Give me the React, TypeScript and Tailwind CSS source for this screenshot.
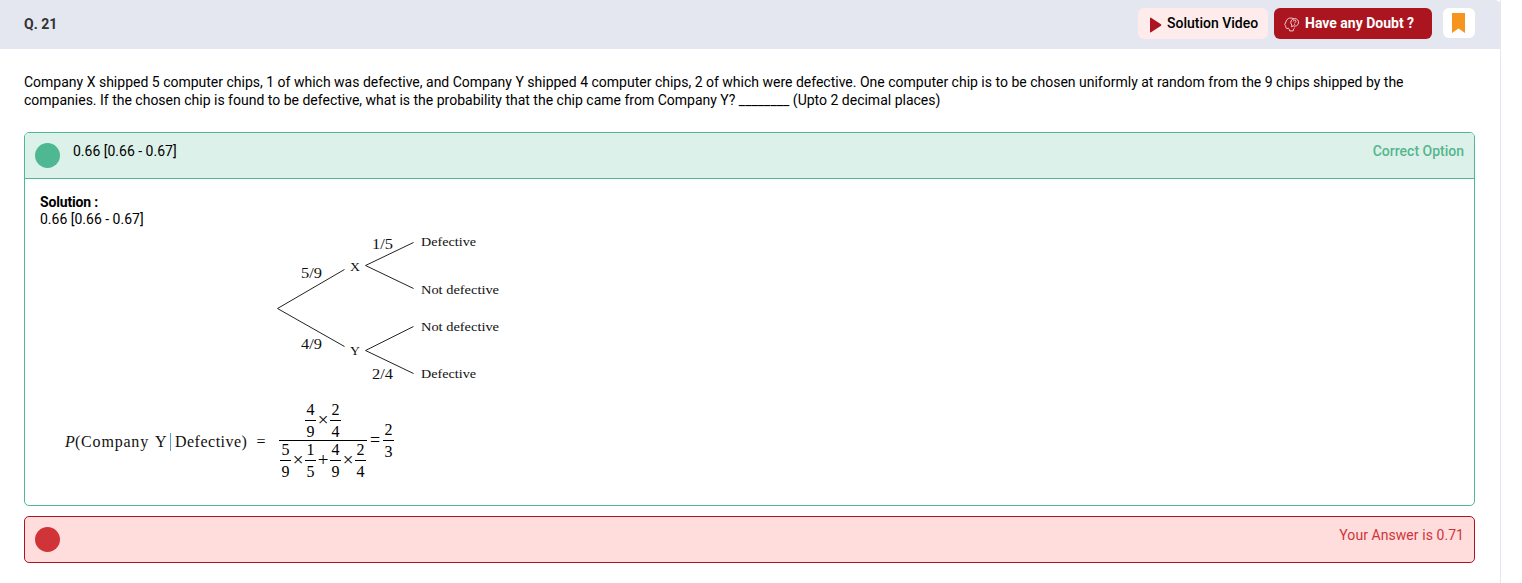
import React from "react";
import type { ReactNode } from "react";

function Fraction({ top, bottom }: { top: ReactNode; bottom: ReactNode }) {
  return (
    <span className="flex w-[11px] flex-col items-center">
      <span className="h-[22px] leading-[23px]">{top}</span>
      <span className="h-px w-full bg-black" />
      <span className="h-[21px] leading-[21px]">{bottom}</span>
    </span>
  );
}

function Operator({ children }: { children: ReactNode }) {
  return <span className="w-[14px] text-center text-[19px] leading-[20px]">{children}</span>;
}

const branches = [
  [252, 31, 319, -8],
  [252, 31, 319, 69],
  [340, -12, 388, -35],
  [340, -12, 388, 11],
  [340, 73, 388, 49],
  [340, 73, 388, 96],
];

const labels: [number, number, number, string][] = [
  [347, -28, 21, "1/5"],
  [276, 1, 21, "5/9"],
  [325, -6, 10, "X"],
  [276, 72, 21, "4/9"],
  [325, 78, 10, "Y"],
  [347, 102, 21, "2/4"],
];

const outcomes: [number, number, string][] = [
  [-31, 55, "Defective"],
  [17, 78, "Not defective"],
  [54, 78, "Not defective"],
  [101, 55, "Defective"],
];

function ProbabilityTree() {
  return (
    <svg width="500" height="160" viewBox="15 -47 500 160" className="block font-['Liberation_Serif',serif]">
      {branches.map(([x1, y1, x2, y2]) => (
        <line key={`${x1}-${y1}-${x2}-${y2}`} x1={x1 + 0.5} y1={y1 + 0.5} x2={x2 + 0.5} y2={y2 + 0.5} stroke="#222" />
      ))}
      {labels.map(([x, y, w, t]) => (
        <text key={t} x={x} y={y} textLength={w} lengthAdjust="spacingAndGlyphs" fontSize={w > 10 ? 14.5 : 13} fill="#111">
          {t}
        </text>
      ))}
      {outcomes.map(([y, w, t]) => (
        <text key={y} x={396} y={y} textLength={w} lengthAdjust="spacingAndGlyphs" fontSize="13.5" fill="#111">
          {t}
        </text>
      ))}
    </svg>
  );
}

export default function App() {
  return (
    <div className="h-[583px] w-[1501px] overflow-hidden border-r border-[#e4e6f3] bg-white font-[Roboto,sans-serif] text-sm text-black">
      <header className="flex h-[49px] w-[1501px] items-center rounded-tr-md bg-[#e4e7f0] pr-[26px] pb-[2px] pl-6">
        <h1 className="mt-px mr-auto font-bold text-[#333]">Q. 21</h1>
        <button className="mr-1.5 flex h-[31px] w-[130px] items-center rounded-md bg-[#fdeceb] pl-3 font-medium">
          <svg width="12" height="16" viewBox="0 0 12 16" className="mt-0.5 mr-[5px]">
            <path d="M0 1.2Q0 .2 1 .7L11 7.3Q11.8 8 11 8.7L1 15.3Q0 15.8 0 14.8Z" fill="#ab1420" />
          </svg>
          <span className="-mt-px whitespace-nowrap">Solution Video</span>
        </button>
        <button className="mr-[11px] flex h-[31px] w-[158px] items-center rounded-md bg-[#aa1520] pl-[10px] text-white">
          <svg width="15" height="15" viewBox="0 0 15 15" className="mt-px mr-[6px]" fill="none" stroke="#f6dfe0" strokeWidth="0.9">
            <path d="M10 2C7 .2 3.2.8 2.2 4.2 1.9 5.6.8 6.6.7 7.6c0 .7 1 .7 1 1.3-.1 1 .1 2.5 1.2 2.6l1.5-.2c.8.3 1 1.4 1.2 2.6h3.6c.2-1.4.5-2.5 1.5-3" />
            <path d="M10.6 1.6a3.8 3.8 0 1 1-1.3 7.3L7.6 9.8 7.8 8A3.8 3.8 0 0 1 10.6 1.6Z" />
            <path d="M9.3 4.4c0-1.7 2.6-1.7 2.6 0 0 .9-1.3 1-1.3 2M10.6 7.2v.8" />
          </svg>
          <span className="-mt-px whitespace-nowrap font-bold">Have any Doubt ?</span>
        </button>
        <button className="mb-px flex h-[30px] w-8 items-center justify-center rounded-md bg-white" aria-label="Bookmark">
          <svg width="13" height="20" viewBox="0 0 13 20" className="mr-px">
            <path d="M0 0H13V20L6.5 15.5 0 20Z" fill="#f7941d" />
          </svg>
        </button>
      </header>

      <main className="pr-[25px] pl-6">
        <p className="h-[83px] pt-[24px] leading-[18px] whitespace-nowrap">
          Company X shipped 5 computer chips, 1 of which was defective, and Company Y shipped 4 computer chips, 2 of which were defective. One computer chip is to be chosen uniformly at random from the 9 chips shipped by the
          <br />
          companies. If the chosen chip is found to be defective, what is the probability that the chip came from Company Y? ________ (Upto 2 decimal places)
        </p>

        <section className="h-[374px] rounded-[5px] border border-[#4db892]">
          <div className="flex h-[46px] rounded-t-[4px] border-b border-[#4db892] bg-[#dcf1e9] pr-[10px] pl-[10px] leading-[18px]">
            <span className="mt-[10px] size-[25px] rounded-full bg-[#4db892]" />
            <span className="mt-[9px] ml-[13px]">0.66 [0.66 - 0.67]</span>
            <span className="mt-[9px] ml-auto font-medium text-[#56b68e]">Correct Option</span>
          </div>
          <div className="pt-[15px] pl-[15px]">
            <div className="h-[36px] leading-[17px]">
              <p className="font-bold tracking-[-0.17px]">Solution :</p>
              <p>0.66 [0.66 - 0.67]</p>
            </div>
            <ProbabilityTree />
            <div className="mt-[10px] ml-[25px] flex items-start font-['Liberation_Serif',serif] text-base">
              <div className="mt-[32px] flex h-5 w-[214px] items-center text-base leading-5 whitespace-nowrap text-[#111]">
                <i className="tracking-[0.2px]">P</i>
                <span className="tracking-[0.8px]">(Company</span>
                <span className="ml-[6px] w-[15px]">Y</span>
                <span className="mr-[4px] h-[18px] w-px shrink-0 bg-[#5ba1d0]" />
                <span className="tracking-[0.5px]">Defective)</span>
                <span className="ml-[9px]">=</span>
              </div>
              <div className="flex w-[88px] flex-col items-center">
                <div className="flex h-10 items-center">
                  <Fraction top="4" bottom="9" />
                  <Operator>×</Operator>
                  <Fraction top="2" bottom="4" />
                </div>
                <div className="h-px w-full bg-black" />
                <div className="flex h-[38px] items-center">
                  <Fraction top="5" bottom="9" />
                  <Operator>×</Operator>
                  <Fraction top="1" bottom="5" />
                  <Operator>+</Operator>
                  <Fraction top="4" bottom="9" />
                  <Operator>×</Operator>
                  <Fraction top="2" bottom="4" />
                </div>
              </div>
              <div className="mt-[18px] ml-[3px] flex items-center">
                <span className="w-[13px] text-lg leading-5">=</span>
                <Fraction top="2" bottom="3" />
              </div>
            </div>
          </div>
        </section>

        <section className="mt-[10px] flex h-[47px] rounded-[5px] border border-[#ab1420] bg-[#fedddc] px-[10px]">
          <span className="mt-[10px] size-[25px] rounded-full bg-[#d03438]" />
          <span className="mt-[9px] ml-auto leading-[18px] tracking-[0.06px] text-[#d03438]">Your Answer is 0.71</span>
        </section>
      </main>
    </div>
  );
}
